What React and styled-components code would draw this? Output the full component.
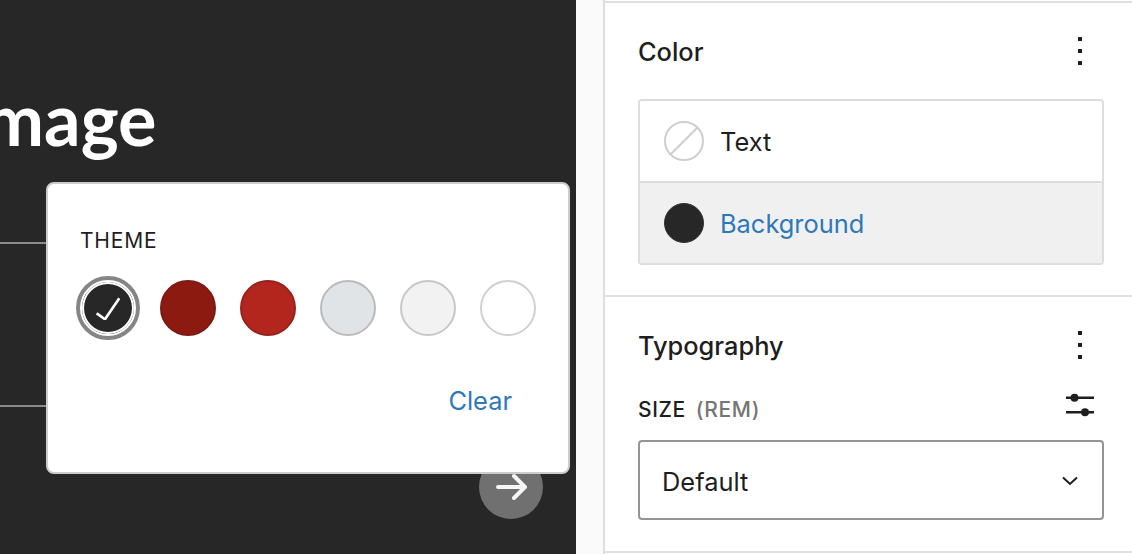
import styled, { createGlobalStyle } from 'styled-components';

const GlobalStyle = createGlobalStyle`
  html, body {
    margin: 0;
    padding: 0;
    background: #fff;
    overflow: hidden;
  }
  * {
    box-sizing: border-box;
  }
`;

const Page = styled.div`
  display: flex;
  width: 1132px;
  height: 554px;
  font-family: Inter, 'Liberation Sans', sans-serif;
  color: #1e1e1e;
`;

const Canvas = styled.div`
  position: relative;
  flex: 0 0 576px;
  height: 100%;
  padding-top: 76px;
  background: #272727;
  overflow: hidden;
`;

const Title = styled.h1`
  margin: 0 0 0 -37px;
  font-family: Lato, sans-serif;
  font-size: 72px;
  font-weight: 700;
  line-height: 84px;
  color: #fff;
  white-space: nowrap;
`;

const Rule = styled.div`
  width: 60px;
  height: 2px;
  margin-top: ${(p) => p.$top}px;
  background: #8a8a8a;
`;

const Popover = styled.div`
  position: absolute;
  z-index: 2;
  top: 182px;
  left: 46px;
  width: 524px;
  height: 292px;
  padding: 45px 32px 0;
  background: #fff;
  border: 2px solid #ccc;
  border-radius: 8px;
`;

const SwatchLabel = styled.div`
  font-size: 21px;
  line-height: 24px;
  letter-spacing: 0.8px;
`;

const Swatches = styled.div`
  display: flex;
  gap: 24px;
  margin-top: 27px;
`;

const Swatch = styled.div`
  position: relative;
  display: flex;
  align-items: center;
  justify-content: center;
  width: 56px;
  height: 56px;
  border-radius: 50%;
  background: ${(p) => p.$color};
  border: 2px solid ${(p) => p.$edge};

  ${(p) =>
    p.$selected &&
    `
    box-shadow: inset 0 0 0 2px #fff;

    &::after {
      content: '';
      position: absolute;
      inset: -6px;
      border: 4px solid #858585;
      border-radius: 50%;
    }
  `}
`;

const ClearRow = styled.div`
  display: flex;
  justify-content: flex-end;
  margin-top: 47px;
  padding-right: 24px;
`;

const LinkText = styled.span`
  padding-top: 2px;
  font-size: 25.4px;
  line-height: 32px;
  color: #2f78b7;
`;

const NextButton = styled.div`
  position: absolute;
  top: 455px;
  left: 479px;
  display: flex;
  align-items: center;
  justify-content: center;
  width: 64px;
  height: 64px;
  padding-left: 2px;
  border-radius: 50%;
  background: #707070;
`;

const Gutter = styled.div`
  flex: 0 0 29px;
  background: #fafafa;
  border-right: 2px solid #ddd;
`;

const Sidebar = styled.aside`
  flex: 1;
  display: flex;
  flex-direction: column;
  padding-top: 1px;
  background: #fff;
`;

const Section = styled.section`
  height: ${(p) => p.$height}px;
  padding: 0 28px 0 33px;
  border-top: 2px solid #e0e0e0;
`;

const SectionHeader = styled.div`
  display: flex;
  align-items: center;
  justify-content: space-between;
  height: 36px;
  margin-top: 31px;
  padding-right: 20px;
`;

const SectionTitle = styled.h2`
  margin: 0;
  font-size: 25.4px;
  font-weight: 500;
  line-height: 32px;
`;

const ColorList = styled.div`
  margin-top: 29px;
  border: 2px solid #ddd;
  border-radius: 4px;
  overflow: hidden;
`;

const ColorRow = styled.div`
  display: flex;
  align-items: center;
  gap: 16px;
  height: ${(p) => p.$height}px;
  padding-left: 24px;
  background: ${(p) => (p.$active ? '#f0f0f0' : '#fff')};
  border-top: ${(p) => (p.$active ? '2px solid #ddd' : 'none')};
`;

const RowLabel = styled.span`
  padding-top: 2px;
  font-size: 25.4px;
  line-height: 32px;
  color: #1e1e1e;
`;

const Indicator = styled.span`
  display: block;
  width: 40px;
  height: 40px;
  border-radius: 50%;
  background: #272727;
  border: 1px solid #333;
`;

const SizeRow = styled.div`
  display: flex;
  align-items: center;
  justify-content: space-between;
  margin-top: 29px;
  height: 32px;
  padding-right: 10px;
`;

const SizeLabel = styled.div`
  font-size: 21px;
  font-weight: 500;
  letter-spacing: 0.6px;
`;

const SizeUnit = styled.span`
  margin-left: 10px;
  color: #757575;
`;

const SlidersButton = styled.div`
  display: flex;
  margin-top: -8px;
`;

const Select = styled.div`
  display: flex;
  align-items: center;
  justify-content: space-between;
  height: 80px;
  margin-top: 15px;
  padding: 2px 24px 0 22px;
  border: 2px solid #949494;
  border-radius: 4px;
  font-size: 25.4px;
`;

const More = () => (
  <svg width="8" height="32" viewBox="0 0 8 32" fill="#1e1e1e">
    <rect x="2" y="1" width="4" height="4" />
    <rect x="2" y="13" width="4" height="4" />
    <rect x="2" y="25" width="4" height="4" />
  </svg>
);

const NoColor = () => (
  <svg width="40" height="40" viewBox="0 0 40 40" fill="none" stroke="#cfcfcf" strokeWidth="2">
    <circle cx="20" cy="20" r="19" />
    <path d="M6.5 33.5 33.5 6.5" />
  </svg>
);

const Sliders = () => (
  <svg width="28" height="24" viewBox="0 0 28 24" fill="#1e1e1e">
    <rect x="0" y="3.5" width="28" height="2.5" />
    <circle cx="8.5" cy="4.75" r="4" />
    <rect x="0" y="18" width="28" height="2.5" />
    <circle cx="19" cy="19.25" r="4" />
  </svg>
);

const Chevron = () => (
  <svg width="16" height="10" viewBox="0 0 16 10" fill="none" stroke="#1e1e1e" strokeWidth="2">
    <path d="M1 1.5 8 8l7-6.5" />
  </svg>
);

const Arrow = () => (
  <svg width="32" height="28" viewBox="0 0 32 28" fill="none" stroke="#f5f5f5" strokeWidth="4" strokeLinecap="round" strokeLinejoin="round">
    <path d="M2 14h27M18 3l11 11-11 11" />
  </svg>
);

const CheckMark = () => (
  <svg width="24" height="24" viewBox="0 0 24 24" fill="none" stroke="#fff" strokeWidth="2.6">
    <path d="M0.7 17.3 9 23.3 23.3 2.3" />
  </svg>
);

const swatches = [
  { color: '#272727', edge: '#fff', selected: true },
  { color: '#8d1a11', edge: '#7d1a12' },
  { color: '#b3261e', edge: '#96231b' },
  { color: '#e1e4e7', edge: '#bbb' },
  { color: '#f2f2f2', edge: '#c8c8c8' },
  { color: '#ffffff', edge: '#d0d0d0' },
];

export default function App() {
  return (
    <Page>
      <GlobalStyle />
      <Canvas>
        <Title>Image</Title>
        <Rule $top={82} />
        <Rule $top={161} />
        <Popover>
          <SwatchLabel>THEME</SwatchLabel>
          <Swatches>
            {swatches.map((s) => (
              <Swatch key={s.color} $color={s.color} $edge={s.edge} $selected={s.selected}>
                {s.selected && <CheckMark />}
              </Swatch>
            ))}
          </Swatches>
          <ClearRow>
            <LinkText>Clear</LinkText>
          </ClearRow>
        </Popover>
        <NextButton>
          <Arrow />
        </NextButton>
      </Canvas>
      <Gutter />
      <Sidebar>
        <Section $height={294}>
          <SectionHeader>
            <SectionTitle>Color</SectionTitle>
            <More />
          </SectionHeader>
          <ColorList>
            <ColorRow $height={80}>
              <NoColor />
              <RowLabel>Text</RowLabel>
            </ColorRow>
            <ColorRow $height={82} $active>
              <Indicator />
              <LinkText>Background</LinkText>
            </ColorRow>
          </ColorList>
        </Section>
        <Section $height={256}>
          <SectionHeader>
            <SectionTitle>Typography</SectionTitle>
            <More />
          </SectionHeader>
          <SizeRow>
            <SizeLabel>
              SIZE<SizeUnit>(REM)</SizeUnit>
            </SizeLabel>
            <SlidersButton>
              <Sliders />
            </SlidersButton>
          </SizeRow>
          <Select>
            Default
            <Chevron />
          </Select>
        </Section>
        <Section $height={3} />
      </Sidebar>
    </Page>
  );
}
